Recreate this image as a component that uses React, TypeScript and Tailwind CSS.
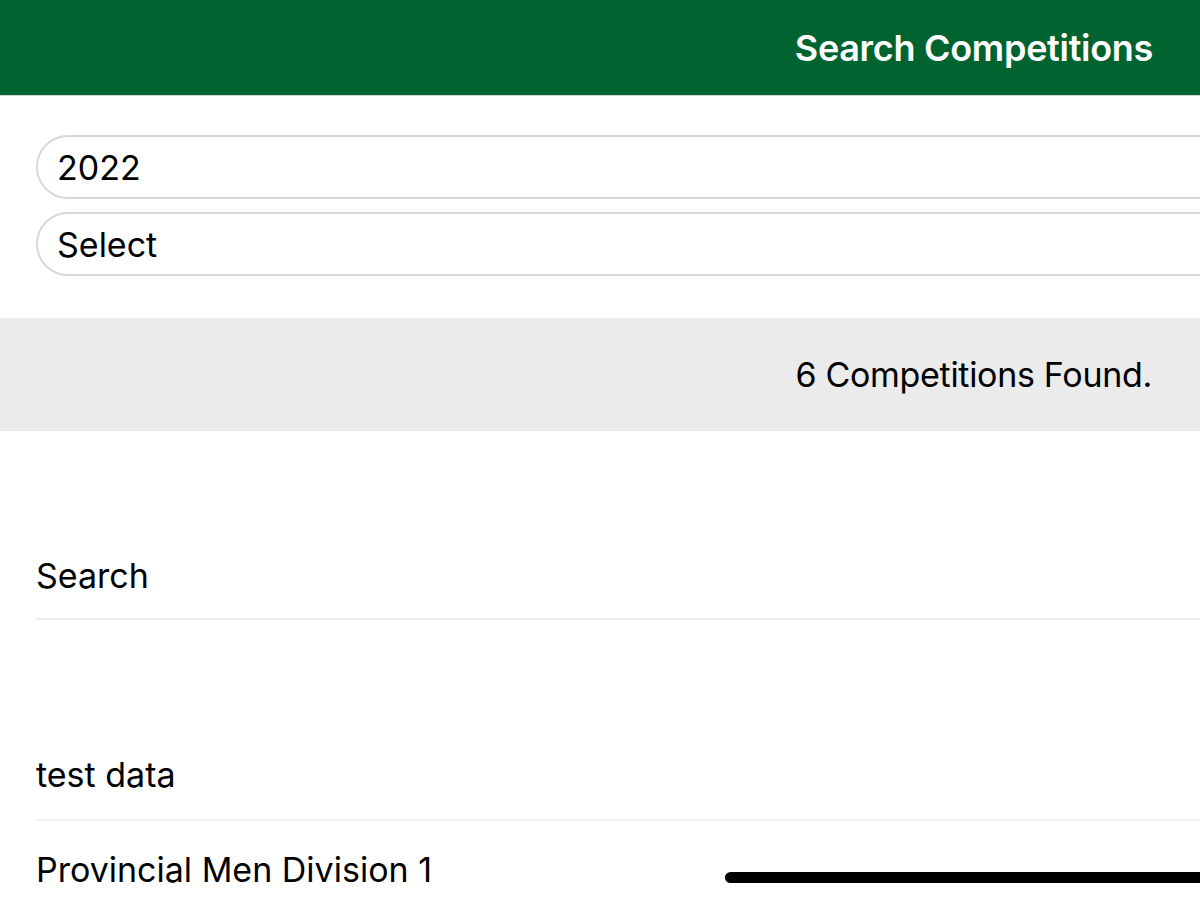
import React from "react";

export default function App() {
  const font = { fontFamily: "Inter, 'Noto Sans', sans-serif" };
  return (
    <div className="relative w-[1200px] h-[900px] overflow-hidden bg-white" style={font}>
      <div className="h-[96px] bg-[#01632f] flex items-center justify-end pr-[47px] border-b border-[#cfd6d1]">
        <span className="text-white text-[36px] font-semibold tracking-[-0.3px]">Search Competitions</span>
      </div>
      <div className="pl-[36px] pt-[39px] flex flex-col gap-[13px] -mr-[40px]">
        <div className="h-[64px] rounded-full border-2 border-[#d9d9d9] flex items-center pl-[19px] text-[34px] text-black">2022</div>
        <div className="h-[64px] rounded-full border-2 border-[#d9d9d9] flex items-center pl-[19px] text-[34px] text-black">Select</div>
      </div>
      <div className="mt-[42px] h-[113px] bg-[#ebebeb] flex items-center justify-end pr-[48px] text-[34px] text-black tracking-[-0.3px]">
        6 Competitions Found.
      </div>
      <div className="pl-[36px]">
        <div className="h-[189px] flex items-end pb-[25px] border-b-2 border-[#ececec] text-[34px] text-black">
          <span className="leading-none">Search</span>
        </div>
        <div className="h-[201px] flex items-end pb-[27px] border-b-2 border-[#f0f0f0] text-[34px] text-black">
          <span className="leading-none">test data</span>
        </div>
        <div className="pt-[23px] text-[34px] text-black">
          <span className="leading-none">Provincial Men Division 1</span>
        </div>
      </div>
      <div className="absolute left-[725px] top-[872px] w-[520px] h-[11px] rounded-full bg-black" />
    </div>
  );
}
